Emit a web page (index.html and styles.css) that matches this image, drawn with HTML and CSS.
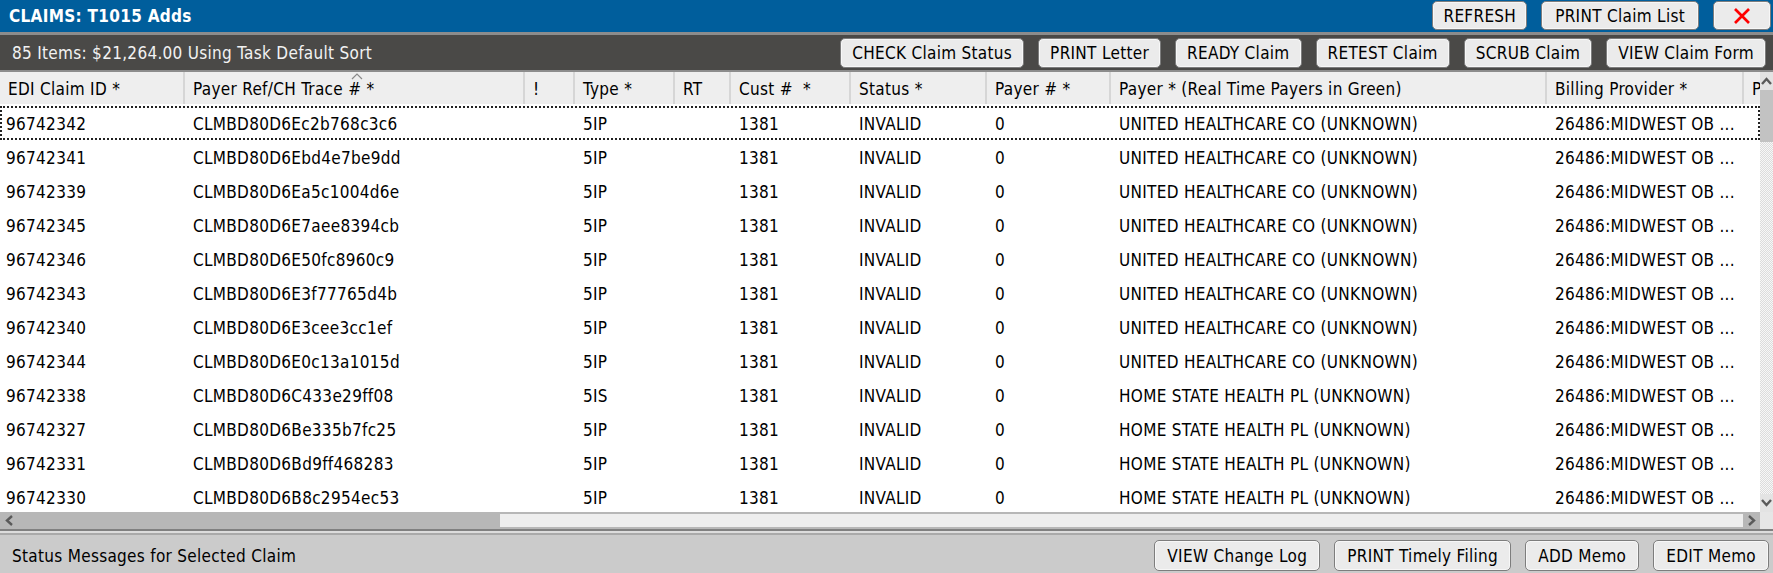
FILE: index.html
```html
<!DOCTYPE html>
<html lang="en">
<head>
<meta charset="utf-8">
<title>CLAIMS: T1015 Adds</title>
<link rel="stylesheet" href="styles.css">
</head>
<body>
<div class="app">
  <header class="titlebar">
    <h1 class="title">CLAIMS: T1015 Adds</h1>
    <div class="actions actions-top">
      <button class="btn">REFRESH</button>
      <button class="btn btn-wide">PRINT Claim List</button>
      <button class="btn btn-close" aria-label="Close">
        <svg width="20" height="16" viewBox="0 0 20 16"><path d="M3 1 L17 15 M17 1 L3 15" stroke="#ff0000" stroke-width="2.7" fill="none"/></svg>
      </button>
    </div>
  </header>
  <div class="toolbar">
    <span class="summary">85 Items: $21,264.00 Using Task Default Sort</span>
    <div class="actions actions-tool">
      <button class="btn">CHECK Claim Status</button>
      <button class="btn">PRINT Letter</button>
      <button class="btn">READY Claim</button>
      <button class="btn">RETEST Claim</button>
      <button class="btn">SCRUB Claim</button>
      <button class="btn">VIEW Claim Form</button>
    </div>
  </div>
  <div class="grid">
    <div class="grid-main">
      <div class="thead">
        <div class="th">EDI Claim ID *</div>
        <div class="th th-sorted">Payer Ref/CH Trace # *<svg class="sort-caret" width="12" height="7" viewBox="0 0 12 7"><path d="M1 6 L6 1 L11 6" stroke="#8a8a8a" stroke-width="1.2" fill="none"/></svg></div>
        <div class="th">!</div>
        <div class="th">Type *</div>
        <div class="th">RT</div>
        <div class="th">Cust # &nbsp;*</div>
        <div class="th">Status *</div>
        <div class="th">Payer # *</div>
        <div class="th">Payer * (Real Time Payers in Green)</div>
        <div class="th">Billing Provider *</div>
        <div class="th">Pay-To Provider *</div>
      </div>
      <div class="tbody">
        <div class="tr tr-focus"><div class="td">96742342</div><div class="td">CLMBD80D6Ec2b768c3c6</div><div class="td"></div><div class="td">5IP</div><div class="td"></div><div class="td">1381</div><div class="td">INVALID</div><div class="td">0</div><div class="td">UNITED HEALTHCARE CO (UNKNOWN)</div><div class="td">26486:MIDWEST OB ...</div><div class="td"></div></div>
        <div class="tr"><div class="td">96742341</div><div class="td">CLMBD80D6Ebd4e7be9dd</div><div class="td"></div><div class="td">5IP</div><div class="td"></div><div class="td">1381</div><div class="td">INVALID</div><div class="td">0</div><div class="td">UNITED HEALTHCARE CO (UNKNOWN)</div><div class="td">26486:MIDWEST OB ...</div><div class="td"></div></div>
        <div class="tr"><div class="td">96742339</div><div class="td">CLMBD80D6Ea5c1004d6e</div><div class="td"></div><div class="td">5IP</div><div class="td"></div><div class="td">1381</div><div class="td">INVALID</div><div class="td">0</div><div class="td">UNITED HEALTHCARE CO (UNKNOWN)</div><div class="td">26486:MIDWEST OB ...</div><div class="td"></div></div>
        <div class="tr"><div class="td">96742345</div><div class="td">CLMBD80D6E7aee8394cb</div><div class="td"></div><div class="td">5IP</div><div class="td"></div><div class="td">1381</div><div class="td">INVALID</div><div class="td">0</div><div class="td">UNITED HEALTHCARE CO (UNKNOWN)</div><div class="td">26486:MIDWEST OB ...</div><div class="td"></div></div>
        <div class="tr"><div class="td">96742346</div><div class="td">CLMBD80D6E50fc8960c9</div><div class="td"></div><div class="td">5IP</div><div class="td"></div><div class="td">1381</div><div class="td">INVALID</div><div class="td">0</div><div class="td">UNITED HEALTHCARE CO (UNKNOWN)</div><div class="td">26486:MIDWEST OB ...</div><div class="td"></div></div>
        <div class="tr"><div class="td">96742343</div><div class="td">CLMBD80D6E3f77765d4b</div><div class="td"></div><div class="td">5IP</div><div class="td"></div><div class="td">1381</div><div class="td">INVALID</div><div class="td">0</div><div class="td">UNITED HEALTHCARE CO (UNKNOWN)</div><div class="td">26486:MIDWEST OB ...</div><div class="td"></div></div>
        <div class="tr"><div class="td">96742340</div><div class="td">CLMBD80D6E3cee3cc1ef</div><div class="td"></div><div class="td">5IP</div><div class="td"></div><div class="td">1381</div><div class="td">INVALID</div><div class="td">0</div><div class="td">UNITED HEALTHCARE CO (UNKNOWN)</div><div class="td">26486:MIDWEST OB ...</div><div class="td"></div></div>
        <div class="tr"><div class="td">96742344</div><div class="td">CLMBD80D6E0c13a1015d</div><div class="td"></div><div class="td">5IP</div><div class="td"></div><div class="td">1381</div><div class="td">INVALID</div><div class="td">0</div><div class="td">UNITED HEALTHCARE CO (UNKNOWN)</div><div class="td">26486:MIDWEST OB ...</div><div class="td"></div></div>
        <div class="tr"><div class="td">96742338</div><div class="td">CLMBD80D6C433e29ff08</div><div class="td"></div><div class="td">5IS</div><div class="td"></div><div class="td">1381</div><div class="td">INVALID</div><div class="td">0</div><div class="td">HOME STATE HEALTH PL (UNKNOWN)</div><div class="td">26486:MIDWEST OB ...</div><div class="td"></div></div>
        <div class="tr"><div class="td">96742327</div><div class="td">CLMBD80D6Be335b7fc25</div><div class="td"></div><div class="td">5IP</div><div class="td"></div><div class="td">1381</div><div class="td">INVALID</div><div class="td">0</div><div class="td">HOME STATE HEALTH PL (UNKNOWN)</div><div class="td">26486:MIDWEST OB ...</div><div class="td"></div></div>
        <div class="tr"><div class="td">96742331</div><div class="td">CLMBD80D6Bd9ff468283</div><div class="td"></div><div class="td">5IP</div><div class="td"></div><div class="td">1381</div><div class="td">INVALID</div><div class="td">0</div><div class="td">HOME STATE HEALTH PL (UNKNOWN)</div><div class="td">26486:MIDWEST OB ...</div><div class="td"></div></div>
        <div class="tr"><div class="td">96742330</div><div class="td">CLMBD80D6B8c2954ec53</div><div class="td"></div><div class="td">5IP</div><div class="td"></div><div class="td">1381</div><div class="td">INVALID</div><div class="td">0</div><div class="td">HOME STATE HEALTH PL (UNKNOWN)</div><div class="td">26486:MIDWEST OB ...</div><div class="td"></div></div>
      </div>
    </div>
    <div class="vscroll">
      <div class="vs-arrow"><svg width="11" height="8" viewBox="0 0 11 8"><path d="M1 7 L5.5 2 L10 7" stroke="#5a5a5a" stroke-width="2.4" fill="none"/></svg></div>
      <div class="vs-thumb"></div>
      <div class="vs-track"></div>
      <div class="vs-arrow"><svg width="11" height="8" viewBox="0 0 11 8"><path d="M1 1 L5.5 6 L10 1" stroke="#5a5a5a" stroke-width="2.4" fill="none"/></svg></div>
    </div>
  </div>
  <div class="hscroll">
    <div class="hs-arrow"><svg width="8" height="11" viewBox="0 0 8 11"><path d="M7 1 L2 5.5 L7 10" stroke="#5a5a5a" stroke-width="2.4" fill="none"/></svg></div>
    <div class="hs-track"></div>
    <div class="hs-thumb"></div>
    <div class="hs-arrow"><svg width="8" height="11" viewBox="0 0 8 11"><path d="M1 1 L6 5.5 L1 10" stroke="#5a5a5a" stroke-width="2.4" fill="none"/></svg></div>
    <div class="hs-corner"></div>
  </div>
  <footer class="statusbar">
    <span class="status-label">Status Messages for Selected Claim</span>
    <div class="actions actions-status">
      <button class="btn">VIEW Change Log</button>
      <button class="btn">PRINT Timely Filing</button>
      <button class="btn">ADD Memo</button>
      <button class="btn">EDIT Memo</button>
    </div>
  </footer>
</div>
</body>
</html>
```
FILE: styles.css
```css
* { box-sizing: border-box; }
html, body { margin: 0; padding: 0; }
body {
  width: 1773px;
  height: 573px;
  overflow: hidden;
  font-family: "DejaVu Sans", "Liberation Sans", sans-serif;
  font-stretch: condensed;
  font-size: 17px;
  letter-spacing: 0.3px;
  color: #000;
  background: #fff;
}
.app { display: flex; flex-direction: column; height: 573px; }

.btn {
  font: inherit;
  font-stretch: condensed;
  letter-spacing: 0.3px;
  color: #000;
  background: #ebebeb;
  border: 1px solid #7d7d7d;
  border-radius: 5px;
  box-shadow: inset 0 0 0 1px #f7f7f7;
  padding: 0 10px;
  height: 30px;
  white-space: nowrap;
  display: flex;
  align-items: center;
  justify-content: center;
}
.actions { display: flex; }

.titlebar {
  height: 35px;
  background: #005e9c;
  border-bottom: 3px solid #8c8c8c;
  display: flex;
  align-items: flex-start;
  justify-content: space-between;
  padding: 1px 2px 0 9px;
}
.title {
  margin: 5px 0 0;
  font-size: 17px;
  font-weight: bold;
  color: #fff;
}
.actions-top { gap: 14px; }
.actions-top .btn { height: 29px; padding: 0 10px; }
.actions-top .btn-wide { padding: 0 13px; }
.actions-top .btn-close { width: 58px; }

.toolbar {
  height: 37px;
  background: #4a4947;
  border-bottom: 2px solid #8c8c8c;
  display: flex;
  align-items: center;
  justify-content: space-between;
  padding: 0 7px 0 12px;
}
.summary { color: #f2f2f2; }
.actions-tool { gap: 14px; }
.actions-tool .btn { padding: 0 11px; }

.grid { display: flex; height: 440px; }
.grid-main { width: 1760px; overflow: hidden; }
.thead, .tr {
  display: grid;
  grid-template-columns: 185px 340px 50px 100px 56px 120px 136px 124px 436px 197px 16px;
}
.thead { height: 32px; background: #eeeeee; }
.th {
  position: relative;
  padding: 0 8px;
  line-height: 34px;
  white-space: nowrap;
  overflow: hidden;
  border-right: 2px solid #d6d6d6;
}
.th:last-child { border-right: 0; }
.sort-caret { position: absolute; left: 166px; top: 1px; }

.tbody { height: 408px; overflow: hidden; padding-top: 2px; }
.tr { height: 34px; border: 2px solid transparent; }
.tr-focus { border: 2px dotted #222; }
.td {
  padding: 1px 6px 0;
  line-height: 31px;
  white-space: nowrap;
  overflow: hidden;
}
.td:first-child { padding-left: 4px; }

.vscroll {
  width: 13px;
  display: flex;
  flex-direction: column;
  background: #e8e8e8;
}
.vs-arrow { height: 18px; display: flex; align-items: center; justify-content: center; background: #e3e3e3; }
.vs-thumb { height: 52px; background: #c2c2c2; }
.vs-track {
  flex: 1;
  background-color: #f4f4f4;
  background-image: repeating-conic-gradient(#dcdcdc 0 25%, #f7f7f7 0 50%);
  background-size: 2px 2px;
}

.hscroll {
  height: 19px;
  display: flex;
  background: #b7b7b7;
  border-bottom: 2px solid #808080;
}
.hs-arrow { width: 17px; display: flex; align-items: center; justify-content: center; }
.hs-track { width: 483px; }
.hs-thumb { flex: 1; background: #eeeeee; margin: 2px 0; }
.hs-corner { width: 13px; background: #e6e6e6; }

.statusbar {
  flex: 1;
  background: #cbcbcb;
  border-top: 2px solid #dcdcdc;
  box-shadow: inset 0 2px 0 #a9a9a9;
  display: flex;
  align-items: center;
  justify-content: space-between;
  padding: 5px 4px 0 12px;
}
.actions-status { gap: 14px; }
.actions-status .btn { height: 31px; padding: 0 12px; }
```
